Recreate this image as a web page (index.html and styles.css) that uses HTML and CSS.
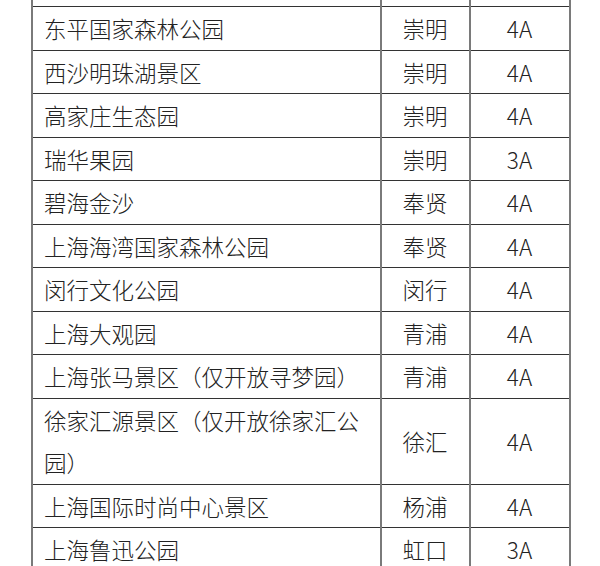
FILE: index.html
```html
<!DOCTYPE html>
<html lang="zh-CN">
<head>
<meta charset="utf-8">
<link rel="stylesheet" href="styles.css">
</head>
<body>
<table class="sites">
  <colgroup>
    <col class="c-name">
    <col class="c-area">
    <col class="c-level">
  </colgroup>
  <tbody>
    <tr class="cut"><td></td><td></td><td></td></tr>
    <tr><td class="name">东平国家森林公园</td><td>崇明</td><td>4A</td></tr>
    <tr><td class="name">西沙明珠湖景区</td><td>崇明</td><td>4A</td></tr>
    <tr><td class="name">高家庄生态园</td><td>崇明</td><td>4A</td></tr>
    <tr><td class="name">瑞华果园</td><td>崇明</td><td>3A</td></tr>
    <tr><td class="name">碧海金沙</td><td>奉贤</td><td>4A</td></tr>
    <tr><td class="name">上海海湾国家森林公园</td><td>奉贤</td><td>4A</td></tr>
    <tr><td class="name">闵行文化公园</td><td>闵行</td><td>4A</td></tr>
    <tr><td class="name">上海大观园</td><td>青浦</td><td>4A</td></tr>
    <tr><td class="name">上海张马景区（仅开放寻梦园）</td><td>青浦</td><td>4A</td></tr>
    <tr><td class="name">徐家汇源景区（仅开放徐家汇公园）</td><td>徐汇</td><td>4A</td></tr>
    <tr><td class="name">上海国际时尚中心景区</td><td>杨浦</td><td>4A</td></tr>
    <tr><td class="name">上海鲁迅公园</td><td>虹口</td><td>3A</td></tr>
  </tbody>
</table>
</body>
</html>
```

FILE: styles.css
```css
html, body {
  margin: 0;
  padding: 0;
  background: #ffffff;
  overflow: hidden;
}

.sites {
  margin-left: 31px;
  border-collapse: collapse;
  table-layout: fixed;
  width: 538px;
  font-family: "Noto Sans CJK SC", "Noto Sans", sans-serif;
  font-weight: 300;
  font-size: 22.5px;
  color: #222222;
}

.c-name { width: 349px; }
.c-area { width: 89px; }
.c-level { width: 100px; }

.sites td {
  padding: 0 12px 0 11px;
  line-height: 42.5px;
  text-align: center;
  vertical-align: middle;
  border-top: 1.5px solid #333333;
  border-bottom: 1.5px solid #333333;
  border-left: 2px solid #7a7a7a;
  border-right: 2px solid #7a7a7a;
}

.sites td.name {
  text-align: left;
}

.sites tr.cut td {
  height: 6px;
  line-height: 6px;
  border-top: none;
}
```
